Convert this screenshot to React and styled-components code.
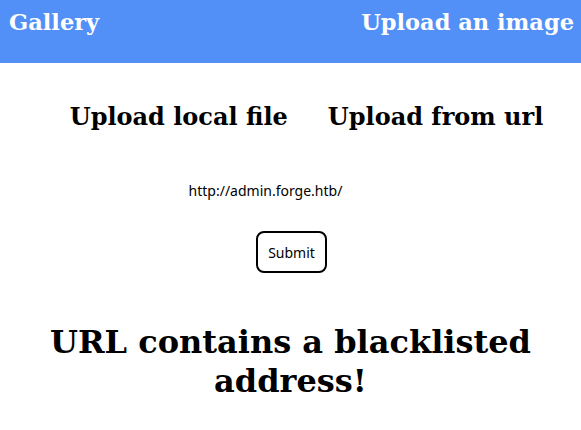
import React from "react";
import styled, { createGlobalStyle } from "styled-components";

const Global = createGlobalStyle`
  html, body { margin: 0; padding: 0; background: #fff; }
  body { font-family: "DejaVu Serif", serif; }
`;

const Header = styled.header`
  background: #5290f8;
  height: 63px;
  display: flex;
  justify-content: space-between;
  align-items: flex-start;
  padding: 9px 7px 0 9px;
  box-sizing: border-box;
`;

const NavLink = styled.a`
  color: #fff;
  font-family: "DejaVu Serif", serif;
  font-weight: bold;
  font-size: 22.5px;
  text-decoration: none;
  line-height: 26px;
`;

const Tabs = styled.div`
  display: flex;
  justify-content: center;
  gap: 40px;
  margin-top: 38px;
  padding-left: 32px;
`;

const Tab = styled.h2`
  margin: 0;
  font-family: "DejaVu Serif", serif;
  font-weight: bold;
  font-size: 24px;
  line-height: 32px;
  color: #000;
`;

const Form = styled.form`
  display: flex;
  flex-direction: column;
  align-items: center;
  margin-top: 49px;
`;

const UrlText = styled.div`
  font-family: "Noto Sans", sans-serif;
  font-size: 14px;
  line-height: 18px;
  color: #000;
  margin-left: -50px;
`;

const Submit = styled.button`
  margin-top: 31px;
  margin-left: 2px;
  width: 71px;
  height: 42px;
  border: 2px solid #000;
  border-radius: 8px;
  background: #fff;
  font-family: "Noto Sans", sans-serif;
  font-size: 14px;
  color: #000;
  padding: 0;
`;

const Message = styled.h1`
  margin: 50px auto 0;
  width: 500px;
  text-align: center;
  font-family: "DejaVu Serif", serif;
  font-weight: bold;
  font-size: 32px;
  line-height: 39px;
  color: #000;
`;

export default function App() {
  return (
    <>
      <Global />
      <Header>
        <NavLink href="#">Gallery</NavLink>
        <NavLink href="#">Upload an image</NavLink>
      </Header>
      <Tabs>
        <Tab>Upload local file</Tab>
        <Tab>Upload from url</Tab>
      </Tabs>
      <Form onSubmit={(e) => e.preventDefault()}>
        <UrlText>http://admin.forge.htb/</UrlText>
        <Submit type="submit">Submit</Submit>
      </Form>
      <Message>URL contains a blacklisted address!</Message>
    </>
  );
}
